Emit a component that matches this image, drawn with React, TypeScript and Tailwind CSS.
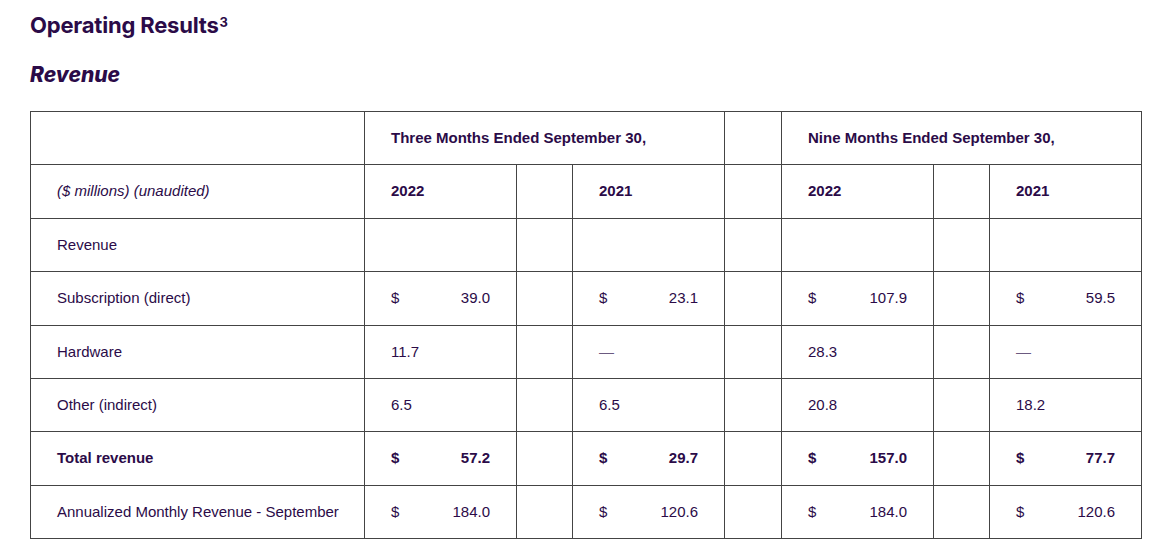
import React from "react"

type Cell = { dollar?: boolean; value?: string }
type Row = { label: string; bold?: boolean; cells: Cell[] }

const rows: Row[] = [
  { label: "Revenue", cells: [{}, {}, {}, {}] },
  {
    label: "Subscription (direct)",
    cells: [
      { dollar: true, value: "39.0" },
      { dollar: true, value: "23.1" },
      { dollar: true, value: "107.9" },
      { dollar: true, value: "59.5" },
    ],
  },
  {
    label: "Hardware",
    cells: [{ value: "11.7" }, { value: "—" }, { value: "28.3" }, { value: "—" }],
  },
  {
    label: "Other (indirect)",
    cells: [{ value: "6.5" }, { value: "6.5" }, { value: "20.8" }, { value: "18.2" }],
  },
  {
    label: "Total revenue",
    bold: true,
    cells: [
      { dollar: true, value: "57.2" },
      { dollar: true, value: "29.7" },
      { dollar: true, value: "157.0" },
      { dollar: true, value: "77.7" },
    ],
  },
  {
    label: "Annualized Monthly Revenue - September",
    cells: [
      { dollar: true, value: "184.0" },
      { dollar: true, value: "120.6" },
      { dollar: true, value: "184.0" },
      { dollar: true, value: "120.6" },
    ],
  },
]

const td = "border border-[#444] px-[26px] align-middle whitespace-nowrap"

const ValueCell = ({ cell, bold }: { cell: Cell; bold?: boolean }) => (
  <td className={td}>
    {cell.dollar ? (
      <div className={`flex justify-between ${bold ? "font-bold" : ""}`}>
        <span>$</span>
        <span>{cell.value}</span>
      </div>
    ) : cell.value === "—" ? (
      <span className="text-[#6b5a80]">{cell.value}</span>
    ) : (
      <span>{cell.value}</span>
    )}
  </td>
)

const App = () => {
  return (
    <div className="min-h-[553px] bg-white pl-[30px] pt-[10px] text-[#2b0b48]">
      {/* TITLE */}
      <h1 className="font-['Inter',sans-serif] text-[22px] leading-[30px] font-bold tracking-[-0.2px]">
        Operating Results<sup className="ml-[1px] text-[13px] font-bold">3</sup>
      </h1>
      <h2 className="mt-[21px] font-['Inter',sans-serif] text-[21px] leading-[28px] font-extrabold italic">
        Revenue
      </h2>

      {/* TABLE */}
      <table className="mt-[22px] w-[1111px] table-fixed border-collapse font-['Liberation_Sans',Arial,sans-serif] text-[15px]">
        <colgroup>
          <col className="w-[334px]" />
          <col className="w-[152px]" />
          <col className="w-[56px]" />
          <col className="w-[152px]" />
          <col className="w-[57px]" />
          <col className="w-[152px]" />
          <col className="w-[56px]" />
          <col className="w-[152px]" />
        </colgroup>
        <tbody>
          <tr className="h-[53.4px] font-bold">
            <td className={td}></td>
            <td className={td} colSpan={3}>
              Three Months Ended September 30,
            </td>
            <td className={td}></td>
            <td className={td} colSpan={3}>
              Nine Months Ended September 30,
            </td>
          </tr>
          <tr className="h-[53.4px]">
            <td className={`${td} italic`}>($ millions) (unaudited)</td>
            <td className={`${td} font-bold`}>2022</td>
            <td className={td}></td>
            <td className={`${td} font-bold`}>2021</td>
            <td className={td}></td>
            <td className={`${td} font-bold`}>2022</td>
            <td className={td}></td>
            <td className={`${td} font-bold`}>2021</td>
          </tr>
          {rows.map((row) => (
            <tr key={row.label} className="h-[53.4px]">
              <td className={`${td} ${row.bold ? "font-bold" : ""}`}>{row.label}</td>
              <ValueCell cell={row.cells[0]} bold={row.bold} />
              <td className={td}></td>
              <ValueCell cell={row.cells[1]} bold={row.bold} />
              <td className={td}></td>
              <ValueCell cell={row.cells[2]} bold={row.bold} />
              <td className={td}></td>
              <ValueCell cell={row.cells[3]} bold={row.bold} />
            </tr>
          ))}
        </tbody>
      </table>
    </div>
  )
}

export default App
